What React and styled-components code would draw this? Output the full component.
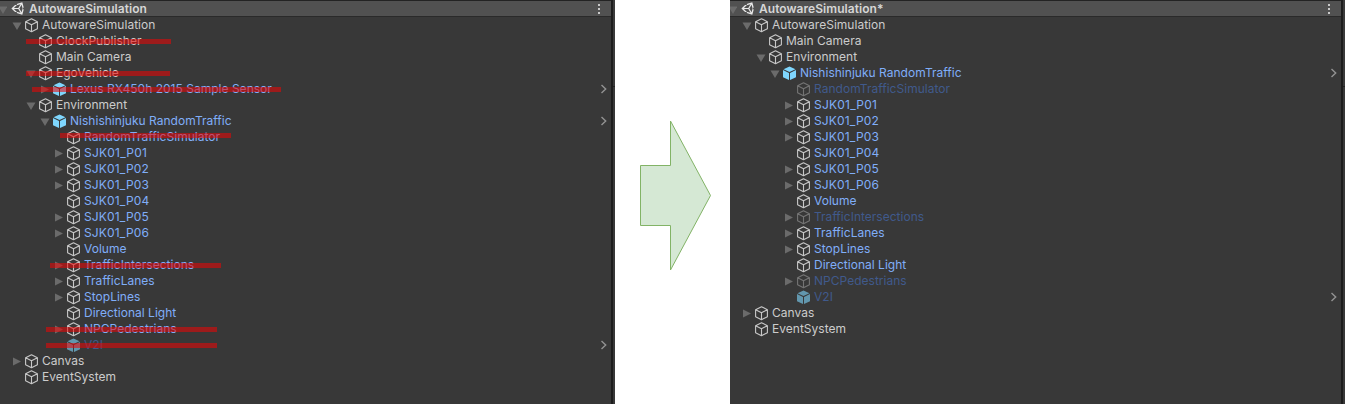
import React from "react";
import styled, { createGlobalStyle } from "styled-components";

const GlobalStyle = createGlobalStyle`
  body { margin: 0; background: #fff; overflow: hidden; }
  * { box-sizing: border-box; }
`;

const Page = styled.main`
  display: flex;
  width: 1345px;
  height: 404px;
  overflow: hidden;
  background: #fff;
  font-family: Inter, "Liberation Sans", sans-serif;
  font-size: 12px;
`;

const Panel = styled.section`
  display: flex;
  width: 615px;
  height: 404px;
  flex: none;
  overflow: hidden;
  background: #383838;
`;

const Hierarchy = styled.div`
  width: 611px;
  flex: none;
  border-top: 1px solid #232323;
`;

const Divider = styled.div`
  width: 2px;
  flex: none;
  background: #1d1d1d;
`;

const Neighbour = styled.div`
  flex: 1;
  height: 87px;
  background: #3a3a3a;
  border-bottom: 1px solid #232323;
`;

const SceneHeader = styled.header`
  display: flex;
  align-items: center;
  height: 16px;
  padding-right: 10px;
  background: #515151;
  border-bottom: 1px solid #2a2a2a;
`;

const SceneName = styled.h1`
  flex: 1;
  margin: 0 0 0 5px;
  font-size: 12px;
  font-weight: 600;
  line-height: 15px;
  letter-spacing: 0.05px;
  color: #d6d6d6;
`;

const Rows = styled.ul`
  margin: 0;
  padding: 0;
  list-style: none;
`;

const Row = styled.li`
  position: relative;
  display: flex;
  align-items: center;
  height: 16px;
  padding: 0 3px 0 ${(p) => 10 + p.$depth * 14}px;
`;

const Toggle = styled.span`
  display: flex;
  width: 14px;
  height: 16px;
  flex: none;
`;

const IconSlot = styled.span`
  display: flex;
  width: 14px;
  height: 16px;
  flex: none;
  opacity: ${(p) => (p.$dim ? (p.$prefab ? 0.6 : 0.42) : 1)};
`;

const Label = styled.span`
  flex: 1;
  margin-left: 4px;
  line-height: 16px;
  white-space: nowrap;
  letter-spacing: ${(p) => p.$tracking ?? 0.02}px;
  color: ${(p) => (p.$dim ? "#405a8c" : p.$blue ? "#80aef8" : "#cccccc")};
`;

const Strike = styled.span`
  position: absolute;
  left: ${(p) => p.$from}px;
  top: ${(p) => p.$top}px;
  width: ${(p) => p.$to - p.$from}px;
  height: 5px;
  background: rgba(238, 5, 5, 0.56);
`;

const Middle = styled.div`
  display: flex;
  width: 115px;
  flex: none;
  padding: 120px 0 0 25px;
`;

const Arrow = ({ open }) => (
  <svg width="14" height="16">
    <path d={open ? "M2.5 5.5h9l-4.500 7.500z" : "M3 4.500v8l8-4z"} fill="#6b6b6b" />
  </svg>
);

const Cube = ({ solid }) =>
  solid ? (
    <svg width="14" height="16">
      <path d="M7.500 1.500 13.500 4.200 7.500 7 1.500 4.200zM1 5 7 7.900v7L1 12.200zM14 5 8 7.900v7l6-2.700z" fill="#7fd6fd" />
    </svg>
  ) : (
    <svg width="14" height="16" fill="none" stroke="#c8c8c8" strokeWidth="1.1" strokeLinejoin="round">
      <path d="M7.500 1.700 13.400 4.700v7L7.500 14.700 1.600 11.700v-7zM1.600 4.700 7.500 7.700l5.900-3M7.500 7.700v7" />
    </svg>
  );

const SceneLogo = () => (
  <svg width="13" height="13" viewBox="0 0 512 512" fill="#e8e8e8">
    <path d="M498.110 206.400 445.310 14.720 248.200 66.080 219 116.140l-59.200-.43L15.540 256l144.240 140.310 59.200-.43 29.220 50 197.080 51.360 52.800-191.620-30-49.630zM223.770 124.200 374.550 86.510 288 232.330H114.870zm0 263.630L114.870 279.710H288l86.550 145.810zm193 14L330.170 256l86.580-145.840L458.560 256z" />
  </svg>
);

const Kebab = () => (
  <svg width="4" height="12" fill="#c8c8c8">
    <path d="M1 1h2v2H1zM1 5h2v2H1zM1 9h2v2H1z" />
  </svg>
);

const Chevron = () => (
  <svg width="8" height="12" fill="none" stroke="#929292" strokeWidth="1.4">
    <path d="M1.500 2 5.700 6 1.500 10" />
  </svg>
);

const sjk = (depth) =>
  [1, 2, 3, 4, 5, 6].map((n) => ({
    name: `SJK01_P0${n}`,
    depth,
    blue: true,
    tracking: n === 1 ? 0.22 : 0.16,
    arrow: n === 4 ? undefined : "closed",
  }));

const before = [
  { name: "AutowareSimulation", depth: 0, arrow: "open" },
  { name: "ClockPublisher", depth: 1, strike: [26, 171, 6] },
  { name: "Main Camera", depth: 1 },
  { name: "EgoVehicle", depth: 1, arrow: "open", strike: [26, 170, 6] },
  { name: "Lexus RX450h 2015 Sample Sensor", depth: 2, arrow: "closed", blue: true, prefab: true, strike: [32, 281, 6] },
  { name: "Environment", depth: 1, arrow: "open" },
  { name: "Nishishinjuku RandomTraffic", depth: 2, arrow: "open", blue: true, prefab: true },
  { name: "RandomTrafficSimulator", depth: 3, blue: true, strike: [60, 231, 4] },
  ...sjk(3),
  { name: "Volume", depth: 3, blue: true },
  { name: "TrafficIntersections", depth: 3, arrow: "closed", blue: true, strike: [50, 221, 6] },
  { name: "TrafficLanes", depth: 3, arrow: "closed", blue: true },
  { name: "StopLines", depth: 3, arrow: "closed", blue: true },
  { name: "Directional Light", depth: 3, blue: true },
  { name: "NPCPedestrians", depth: 3, arrow: "closed", blue: true, strike: [46, 217, 6] },
  { name: "V2I", depth: 3, blue: true, prefab: true, dim: true, strike: [46, 217, 6] },
  { name: "Canvas", depth: 0, arrow: "closed" },
  { name: "EventSystem", depth: 0 },
];

const after = [
  { name: "AutowareSimulation", depth: 0, arrow: "open" },
  { name: "Main Camera", depth: 1 },
  { name: "Environment", depth: 1, arrow: "open" },
  { name: "Nishishinjuku RandomTraffic", depth: 2, arrow: "open", blue: true, prefab: true },
  { name: "RandomTrafficSimulator", depth: 3, blue: true, dim: true },
  ...sjk(3),
  { name: "Volume", depth: 3, blue: true },
  { name: "TrafficIntersections", depth: 3, arrow: "closed", blue: true, dim: true },
  { name: "TrafficLanes", depth: 3, arrow: "closed", blue: true },
  { name: "StopLines", depth: 3, arrow: "closed", blue: true },
  { name: "Directional Light", depth: 3, blue: true },
  { name: "NPCPedestrians", depth: 3, arrow: "closed", blue: true, dim: true },
  { name: "V2I", depth: 3, blue: true, prefab: true, dim: true },
  { name: "Canvas", depth: 0, arrow: "closed" },
  { name: "EventSystem", depth: 0 },
];

const HeaderToggle = styled(Toggle)`
  width: 11px;
  height: 15px;
  margin-left: -4px;
  margin-right: 4px;
`;

function HierarchyPanel({ title, items }) {
  return (
    <Panel>
      <Hierarchy>
        <SceneHeader>
          <HeaderToggle><Arrow open /></HeaderToggle>
          <SceneLogo />
          <SceneName>{title}</SceneName>
          <Kebab />
        </SceneHeader>
        <Rows>
          {items.map((it) => (
            <Row key={it.name} $depth={it.depth}>
              <Toggle>{it.arrow && <Arrow open={it.arrow === "open"} />}</Toggle>
              <IconSlot $dim={it.dim} $prefab={it.prefab}><Cube solid={it.prefab} /></IconSlot>
              <Label $blue={it.blue} $dim={it.dim} $tracking={it.tracking}>{it.name}</Label>
              {it.prefab && <Chevron />}
              {it.strike && <Strike $from={it.strike[0]} $to={it.strike[1]} $top={it.strike[2]} />}
            </Row>
          ))}
        </Rows>
      </Hierarchy>
      <Divider />
      <Neighbour />
    </Panel>
  );
}

export default function App() {
  return (
    <Page>
      <GlobalStyle />
      <HierarchyPanel title="AutowareSimulation" items={before} />
      <Middle>
        <svg width="72" height="152">
          <path d="M.5 45.500h30V1L70.500 75.500 30.500 150v-44.500H.5z" fill="#d5e8d4" stroke="#82b366" />
        </svg>
      </Middle>
      <HierarchyPanel title="AutowareSimulation*" items={after} />
    </Page>
  );
}
